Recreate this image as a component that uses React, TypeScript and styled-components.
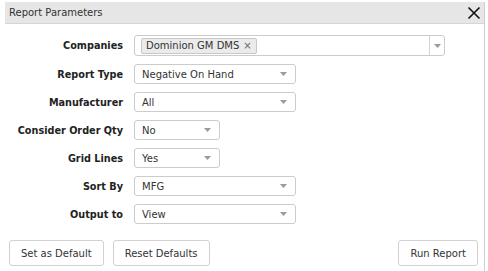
import { Fragment } from "react";
import styled, { createGlobalStyle } from "styled-components";

const GlobalStyle = createGlobalStyle`
  html, body {
    margin: 0;
    padding: 0;
    background: #ffffff;
  }
  * {
    box-sizing: border-box;
  }
`;

const Page = styled.div`
  width: 488px;
  height: 271px;
  background: #ffffff;
  padding: 2px 3px 0 5px;
  font-family: "DejaVu Sans", Verdana, sans-serif;
  font-size: 10px;
  color: #333333;
  overflow: hidden;
`;

const Dialog = styled.div`
  height: 100%;
  border-right: 1px solid #cfcfcf;
  display: flex;
  flex-direction: column;
`;

const Header = styled.div`
  height: 22px;
  background: #e6e6e6;
  border-bottom: 1px solid #d6d6d6;
  display: flex;
  align-items: center;
  justify-content: space-between;
  padding: 0 3px 0 4px;
`;

const Title = styled.span`
  font-size: 10px;
  color: #333333;
`;

const CloseButton = styled.button`
  border: none;
  background: none;
  padding: 0;
  width: 14px;
  height: 14px;
  display: flex;
  cursor: pointer;
`;

const Form = styled.div`
  display: grid;
  grid-template-columns: 118px auto;
  column-gap: 11px;
  row-gap: 8px;
  padding: 11px 0 0 0;
  align-items: center;
`;

const Label = styled.label`
  text-align: right;
  font-weight: bold;
  font-size: 9.7px;
  color: #222222;
`;

const Select = styled.div<{ $width: number }>`
  width: ${(p) => p.$width}px;
  height: 20px;
  border: 1px solid #cccccc;
  border-radius: 3px;
  display: flex;
  align-items: center;
  justify-content: space-between;
  padding: 0 8px 0 7px;
  font-size: 10px;
  color: #333333;
  background: #ffffff;
`;

const MultiSelect = styled.div`
  width: 311px;
  height: 21px;
  border: 1px solid #cccccc;
  border-radius: 3px;
  display: flex;
  align-items: center;
  background: #ffffff;
`;

const TagArea = styled.div`
  flex: 1;
  display: flex;
  align-items: center;
  padding-left: 6px;
`;

const Tag = styled.span`
  display: inline-flex;
  align-items: center;
  gap: 4px;
  height: 16px;
  padding: 0 4px;
  background: #ebebeb;
  border: 1px solid #c8c8c8;
  border-radius: 2px;
  font-size: 10px;
  color: #333333;
`;

const TagRemove = styled.span`
  font-size: 10px;
  color: #666666;
`;

const ArrowCell = styled.div`
  width: 15px;
  height: 100%;
  border-left: 1px solid #d4d4d4;
  display: flex;
  align-items: center;
  justify-content: center;
`;

const Caret = () => (
  <svg width="7" height="4" viewBox="0 0 7 4">
    <path d="M0 0 L7 0 L3.5 4 Z" fill="#9a9a9a" />
  </svg>
);

const Footer = styled.div`
  margin-top: auto;
  display: flex;
  align-items: center;
  padding: 0 6px 5px 4px;
  gap: 9px;
`;

const Button = styled.button<{ $push?: boolean }>`
  height: 26px;
  padding: 0 11px;
  border: 1px solid #d2d2d2;
  border-radius: 3px;
  background: #ffffff;
  font-family: "DejaVu Sans", Verdana, sans-serif;
  font-size: 10px;
  color: #333333;
  margin-left: ${(p) => (p.$push ? "auto" : "0")};
  cursor: pointer;
`;

const fields: { label: string; value: string; width: number }[] = [
  { label: "Report Type", value: "Negative On Hand", width: 162 },
  { label: "Manufacturer", value: "All", width: 162 },
  { label: "Consider Order Qty", value: "No", width: 86 },
  { label: "Grid Lines", value: "Yes", width: 86 },
  { label: "Sort By", value: "MFG", width: 162 },
  { label: "Output to", value: "View", width: 162 },
];

export default function App() {
  return (
    <>
      <GlobalStyle />
      <Page>
        <Dialog>
          <Header>
            <Title>Report Parameters</Title>
            <CloseButton aria-label="Close">
              <svg width="14" height="14" viewBox="0 0 14 14">
                <path
                  d="M1.5 1.5 L12.5 12.5 M12.5 1.5 L1.5 12.5"
                  stroke="#111111"
                  strokeWidth="1.6"
                />
              </svg>
            </CloseButton>
          </Header>
          <Form>
            <Label>Companies</Label>
            <MultiSelect>
              <TagArea>
                <Tag>
                  Dominion GM DMS <TagRemove>×</TagRemove>
                </Tag>
              </TagArea>
              <ArrowCell>
                <Caret />
              </ArrowCell>
            </MultiSelect>
            {fields.map((f) => (
              <Fragment key={f.label}>
                <Label>{f.label}</Label>
                <Select $width={f.width}>
                  <span>{f.value}</span>
                  <Caret />
                </Select>
              </Fragment>
            ))}
          </Form>
          <Footer>
            <Button>Set as Default</Button>
            <Button>Reset Defaults</Button>
            <Button $push>Run Report</Button>
          </Footer>
        </Dialog>
      </Page>
    </>
  );
}
